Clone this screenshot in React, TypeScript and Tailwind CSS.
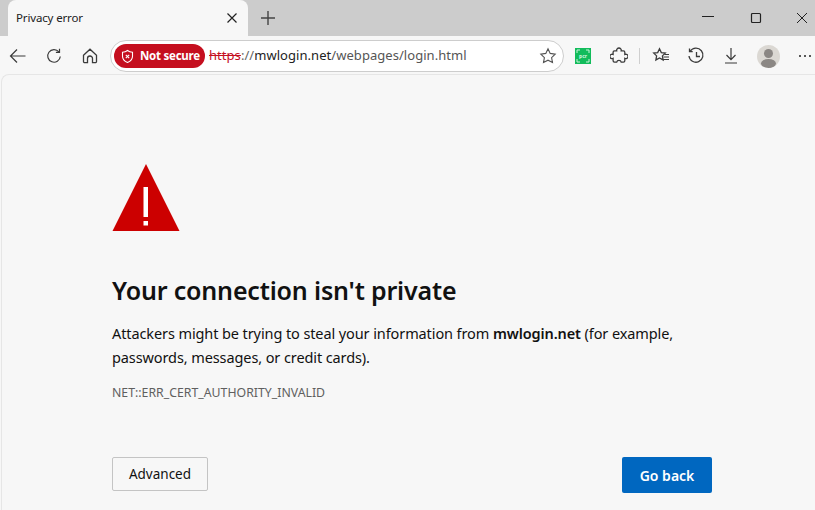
import React from "react";

const stroke = "#3b3b3b";

function Ic({ children, w = 20, h = 20, cls = "" }: { children: React.ReactNode; w?: number; h?: number; cls?: string }) {
  return (
    <svg width={w} height={h} viewBox={`0 0 ${w} ${h}`} fill="none" stroke={stroke} strokeWidth="1.2" className={`shrink-0 ${cls}`}>
      {children}
    </svg>
  );
}

export default function App() {
  return (
    <div className="w-[815px] h-[510px] overflow-hidden flex flex-col bg-[#f7f7f7] font-['Noto_Sans','Open_Sans',sans-serif] text-[#111]">
      {/* tab strip */}
      <div className="h-[36px] bg-[#cccccc] flex items-end shrink-0">
        <div className="ml-[8px] w-[240px] h-[36px] bg-[#f7f7f7] rounded-t-[8px] flex items-center pl-[8px] pr-[10px] justify-between">
          <span className="text-[11.500px] text-[#222] tracking-[-0.15px]">Privacy error</span>
          <Ic w={12} h={12}><path d="M1.500 1.500l9 9M10.500 1.500l-9 9" stroke="#222" /></Ic>
        </div>
        <div className="ml-[12px] h-[36px] flex items-center">
          <Ic w={16} h={16}><path d="M8 1v14M1 8h14" strokeWidth="1.400" stroke="#444" /></Ic>
        </div>
        <div className="ml-auto h-[36px] flex items-center">
          <Ic w={12} h={12} cls="mr-[36px]"><path d="M0 4.500h12" stroke="#222" strokeWidth="1" /></Ic>
          <Ic w={12} h={12} cls="mr-[34px]"><rect x="1.500" y="1.500" width="9" height="9" rx="1" stroke="#222" /></Ic>
          <Ic w={12} h={12} cls="mr-[7px]"><path d="M1 1l10 10M11 1L1 11" stroke="#222" strokeWidth="1" /></Ic>
        </div>
      </div>

      {/* toolbar */}
      <div className="h-[38px] pt-[2px] bg-[#f7f7f7] flex items-center shrink-0 relative">
        <Ic w={17} h={16} cls="ml-[9px]"><path d="M16.500 8H1.500M8 1.500L1.500 8 8 14.500" strokeWidth="1.200" /></Ic>
        <Ic w={16} h={16} cls="ml-[20px]"><path d="M12.900 3.900A6.300 6.300 0 1 0 14.300 8.500" /><path d="M13.500 .8v3.600H9.900" /></Ic>
        <Ic w={16} h={16} cls="ml-[20px]"><path d="M1.500 7.200L8 1.200l6.500 6v6.300a1.200 1.200 0 0 1-1.200 1.200H10.500V10.500a2.500 2.500 0 0 0-5 0v4.200H2.700a1.200 1.200 0 0 1-1.200-1.200z" strokeWidth="1.300" /></Ic>
        <div className="ml-[12px] w-[454px] h-[32px] rounded-full border border-[#cdcdcd] bg-white flex items-center pl-[3px] pr-[6px]">
          <div className="h-[24px] w-[91px] rounded-full bg-[#c50f1f] flex items-center pl-[6px] shrink-0">
            <svg width="15" height="15" viewBox="0 0 15 15" fill="none" stroke="#fff" strokeWidth="1.100" className="shrink-0">
              <path d="M7.500 1.500c1.500 1.200 3 1.700 5 1.800v4c0 3-2 5-5 6.200-3-1.200-5-3.200-5-6.200v-4c2-.1 3.500-.6 5-1.800z" />
              <path d="M5.800 5.800l3.400 3.400M9.200 5.800L5.800 9.200" />
            </svg>
            <span className="ml-[5px] text-[11.500px] font-bold text-white whitespace-nowrap tracking-[-0.25px]">Not secure</span>
          </div>
          <span className="ml-[4px] text-[13px] whitespace-nowrap text-[#222] tracking-[0.05px]">
            <span className="text-[#c50f1f] line-through">https</span>
            <span className="text-[#666]">://</span>mwlogin.net<span className="text-[#555]">/webpages/login.html</span>
          </span>
          <Ic w={18} h={18} cls="ml-auto">
            <path d="M9 1.800l2.200 4.600 5 .7-3.600 3.500.9 5L9 13.200l-4.500 2.400.9-5L1.800 7.100l5-.7z" strokeWidth="1.100" stroke="#555" />
          </Ic>
        </div>
        <div className="ml-[11px] w-[16px] h-[16px] bg-[#12bc5b] flex items-center justify-center shrink-0 relative">
          <svg width="14" height="14" viewBox="0 0 14 14" fill="none" stroke="#c9f2da" strokeWidth="1" className="absolute inset-[1px]">
            <path d="M1 4V1h3M10 1h3v3M13 10v3h-3M4 13H1v-3" />
          </svg>
          <span className="text-[5px] leading-none font-bold text-[#d6f5e2]">pcr</span>
        </div>
        <Ic w={18} h={18} cls="ml-[19px]">
          <path d="M6.700 3.800a2.300 2.300 0 1 1 4.500 0h2.200a1.400 1.400 0 0 1 1.400 1.400v2.300a2.200 2.200 0 1 1 0 3.900v2.300a1.400 1.400 0 0 1-1.400 1.400h-2.200a2.300 2.300 0 0 0-4.500 0H4.500a1.400 1.400 0 0 1-1.400-1.400v-2.300a2.200 2.200 0 1 1 0-3.900V5.200a1.400 1.400 0 0 1 1.400-1.400z" strokeWidth="1.300" />
        </Ic>
        <div className="ml-[11px] w-px h-[16px] bg-[#cfcfcf] shrink-0" />
        <Ic w={18} h={18} cls="ml-[12px]">
          <path d="M7.500 1.800l1.800 3.800 4 .5-2.900 2.800.7 4-3.600-2-3.600 2 .7-4L1.700 6.100l4-.5z" strokeWidth="1.300" />
          <path d="M12.500 7.500h4.500M11.500 10h5.500M10.500 12.500h6.500" />
        </Ic>
        <Ic w={18} h={18} cls="ml-[17px]">
          <path d="M3.200 4.200A7 7 0 1 1 2 9" strokeWidth="1.300" />
          <path d="M2.500 1.500v3.200h3.200M9.500 5v4.500h3.500" strokeWidth="1.300" />
        </Ic>
        <Ic w={18} h={18} cls="ml-[17px]">
          <path d="M9 1v11.500M4.500 8l4.500 4.700L13.500 8M3 16h12" />
        </Ic>
        <div className="ml-[17px] w-[23px] h-[23px] rounded-full bg-[#dbd8d3] flex items-center justify-center overflow-hidden shrink-0">
          <svg width="23" height="23" viewBox="0 0 23 23" fill="#8b8784">
            <circle cx="11.500" cy="8.500" r="4.500" />
            <ellipse cx="11.500" cy="18.500" rx="7.500" ry="4.500" />
          </svg>
        </div>
        <div className="ml-[19px] flex gap-[3px] shrink-0">
          <span className="w-[2px] h-[2px] bg-[#222] rounded-full" />
          <span className="w-[2px] h-[2px] bg-[#222] rounded-full" />
          <span className="w-[2px] h-[2px] bg-[#222] rounded-full" />
        </div>
      </div>

      {/* page */}
      <div className="flex-1 ml-[1px] bg-[#f7f7f7] border-t border-l border-[#e6e6e6] rounded-tl-[8px] pl-[110px] pt-[89px]">
        <svg width="68" height="68" viewBox="0 0 68 68" className="block">
          <path d="M34 0L67.500 67H.500z" fill="#cc0000" />
          <rect x="31.500" y="23" width="4.500" height="30" fill="#fff" />
          <rect x="31.500" y="57" width="4.500" height="4.500" fill="#fff" />
        </svg>
        <h1 className="mt-[41px] text-[25px] leading-[34px] font-semibold text-[#111] tracking-[-0.17px]">Your connection isn't private</h1>
        <p className="mt-[14px] w-[600px] text-[14.500px] leading-[24px] text-[#111] tracking-[-0.1px]">
          Attackers might be trying to steal your information from <b className="font-semibold">mwlogin.net</b> (for example, passwords, messages, or credit cards).
        </p>
        <div className="mt-[16px] text-[12.300px] leading-[16px] text-[#5f5f5f]">NET::ERR_CERT_AUTHORITY_INVALID</div>
        <div className="mt-[56px] w-[600px] flex justify-between items-start">
          <button className="w-[96px] h-[34px] bg-[#f7f7f7] border border-[#c4c4c4] rounded-[2px] text-[13.500px] text-[#111]">Advanced</button>
          <button className="w-[90px] h-[36px] bg-[#0067c0] rounded-[2px] text-[14px] font-semibold text-white">Go back</button>
        </div>
      </div>
    </div>
  );
}
